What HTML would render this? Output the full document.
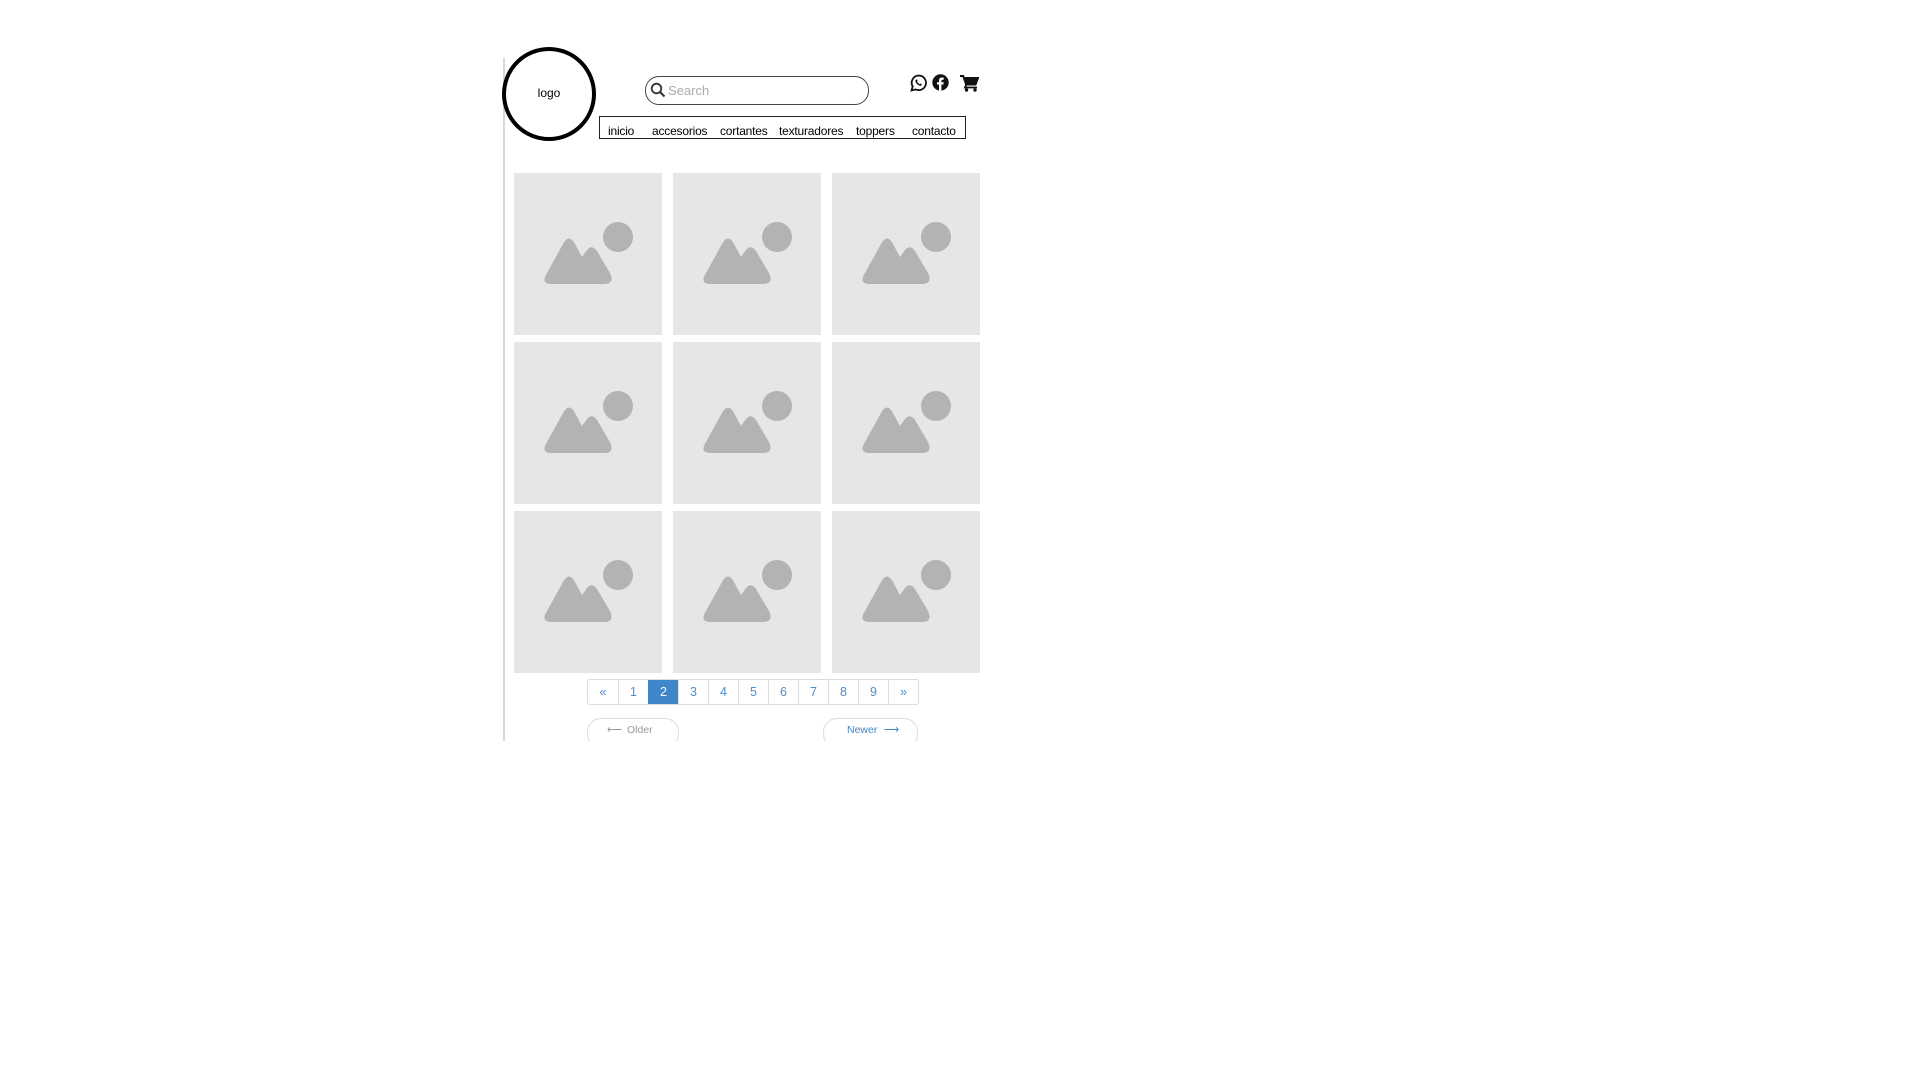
<!DOCTYPE html>
<html><head><meta charset="utf-8"><style>
*{margin:0;padding:0;box-sizing:border-box}
body{width:1920px;height:1080px;background:#fff;position:relative;overflow:hidden;font-family:"Liberation Sans",sans-serif}
.a{position:absolute}
.vl{left:503px;top:58px;width:2px;height:683px;background:#d8d8d8}
.logo{left:502px;top:47px;width:94px;height:94px;border:4.5px solid #000;border-radius:50%;font-size:12px;text-align:center;line-height:85px}
.search{left:645px;top:76px;width:224px;height:29px;border:1.5px solid #444;border-radius:14px}
.search span{position:absolute;left:22px;top:6px;font-size:13px;color:#aaa}
.nav{left:599px;top:116px;width:367px;height:23px;border:1.5px solid #222;font-size:12px;letter-spacing:-0.2px}
.nav span{position:absolute;top:7px}
.tile{width:148px;height:162px;background:#e6e6e6}
.pg{left:587px;top:679px;height:26px;display:flex;border:1.5px solid #ddd;border-radius:3px;overflow:hidden}
.pg div{width:30px;border-left:1.5px solid #ddd;color:#4a8fd0;font-size:12.5px;text-align:center;line-height:25px}
.pg div:first-child{border-left:none}
.pg .on{background:#3f87c9;color:#fff;border-color:#3f87c9}
.btn{top:718px;height:30px;border:1.5px solid #ddd;border-radius:14px;font-size:10.5px;line-height:23px}
.cut{left:560px;top:741px;width:400px;height:20px;background:#fff}
</style></head><body>
<div class="a vl"></div>
<div class="a logo">logo</div>
<div class="a search"><svg class="a" style="left:4px;top:5px" width="16" height="16" viewBox="0 0 16 16"><circle cx="6.5" cy="6.5" r="4.8" fill="none" stroke="#333" stroke-width="1.8"/><path d="M10 10l4.5 4.5" stroke="#333" stroke-width="2"/></svg><span>Search</span></div>
<svg class="a" style="left:910px;top:74px" width="18" height="18" viewBox="0 0 18 18"><path d="M9 1.5a7.3 7.3 0 0 0-6.3 11L1.5 16.5l4.1-1.1A7.3 7.3 0 1 0 9 1.5z" fill="none" stroke="#111" stroke-width="1.8"/><path d="M6.3 5.5c.5-.3 1 .2 1.2.9.2.6-.5 1 -.3 1.4.5 1 1.4 1.9 2.4 2.3.4.2.8-.6 1.3-.4.7.3 1.2.7.9 1.2-.4.8-1.5 1-2.5.6-1.7-.7-3.2-2.2-3.8-3.9-.3-1 .2-1.8.8-2.1z" fill="#111"/></svg>
<svg class="a" style="left:932px;top:74px" width="17" height="17" viewBox="0 0 17 17"><circle cx="8.5" cy="8.5" r="8.2" fill="#111"/><path d="M9.4 17V10.5h2l.3-2.3H9.4V6.8c0-.7.2-1.1 1.1-1.1h1.2V3.6c-.3 0-1-.1-1.8-.1-1.800 0-2.9 1-2.9 3v1.7H5v2.3h2V17z" fill="#fff"/></svg>
<svg class="a" style="left:960px;top:75px" width="19" height="17" viewBox="0 0 19 17"><path d="M0 1h3.2l3 8.5h9.3l2.5-6.5H5" fill="none" stroke="#111" stroke-width="2"/><path d="M5 3h13l-2.5 6.5H6.2z" fill="#111"/><path d="M6.2 9.5L5 12.5h12" fill="none" stroke="#111" stroke-width="1.8"/><circle cx="6.5" cy="15" r="1.7" fill="#111"/><circle cx="15" cy="15" r="1.7" fill="#111"/></svg>
<div class="a nav"><span style="left:8px">inicio</span><span style="left:52px">accesorios</span><span style="left:120px">cortantes</span><span style="left:179px">texturadores</span><span style="left:256px">toppers</span><span style="left:312px">contacto</span></div>
<svg width="0" height="0" style="position:absolute"><defs><g id="ic"><circle cx="104" cy="64" r="15" fill="#b3b3b3"/><path d="M33 100 L49 71 Q55 60 61 71 L68 84 L73 77 Q78 71 83 78 L96 100 Q101 111 90 111 L38 111 Q26 111 33 100z" fill="#b3b3b3"/></g></defs></svg>
<div class="a tile" style="left:514px;top:173px"><svg width="148" height="162"><use href="#ic"/></svg></div>
<div class="a tile" style="left:673px;top:173px"><svg width="148" height="162"><use href="#ic"/></svg></div>
<div class="a tile" style="left:832px;top:173px"><svg width="148" height="162"><use href="#ic"/></svg></div>
<div class="a tile" style="left:514px;top:342px"><svg width="148" height="162"><use href="#ic"/></svg></div>
<div class="a tile" style="left:673px;top:342px"><svg width="148" height="162"><use href="#ic"/></svg></div>
<div class="a tile" style="left:832px;top:342px"><svg width="148" height="162"><use href="#ic"/></svg></div>
<div class="a tile" style="left:514px;top:511px"><svg width="148" height="162"><use href="#ic"/></svg></div>
<div class="a tile" style="left:673px;top:511px"><svg width="148" height="162"><use href="#ic"/></svg></div>
<div class="a tile" style="left:832px;top:511px"><svg width="148" height="162"><use href="#ic"/></svg></div>
<div class="a pg"><div>«</div><div>1</div><div class="on">2</div><div>3</div><div>4</div><div>5</div><div>6</div><div>7</div><div>8</div><div>9</div><div>»</div></div>
<div class="a btn" style="left:587px;width:92px;color:#999"><span style="position:absolute;left:19px;top:0">⟵</span><span style="position:absolute;left:39px">Older</span></div>
<div class="a btn" style="left:823px;width:95px;color:#3f87c9"><span style="position:absolute;left:23px">Newer</span><span style="position:absolute;left:60px;top:0">⟶</span></div>
<div class="a cut"></div>
</body></html>
